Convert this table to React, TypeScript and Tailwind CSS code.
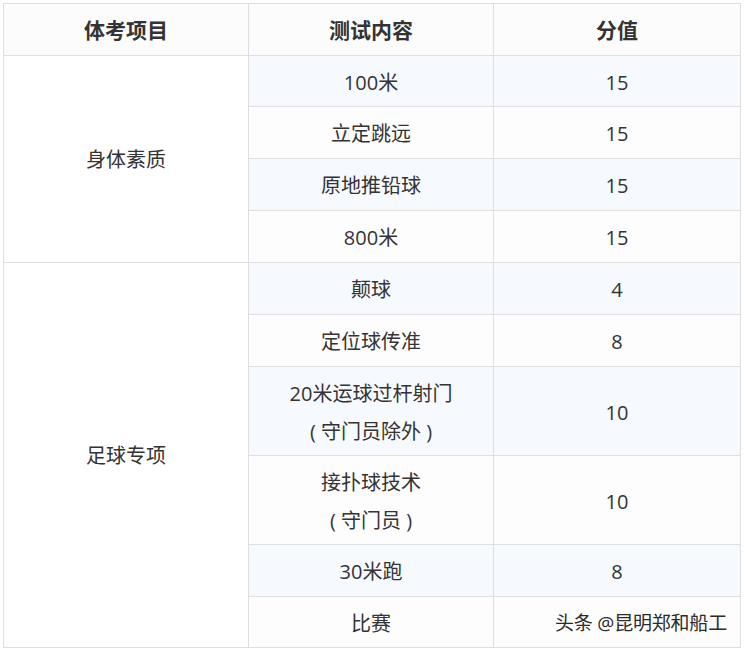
import React from "react";

const font = { fontFamily: '"Open Sans", "Noto Sans CJK SC", sans-serif' };

type Row = { item?: string; span?: number; content: string[]; score: string; h: number; blue: boolean };

const rows: Row[] = [
  { item: "身体素质", span: 4, content: ["100米"], score: "15", h: 51, blue: true },
  { content: ["立定跳远"], score: "15", h: 52, blue: false },
  { content: ["原地推铅球"], score: "15", h: 52, blue: true },
  { content: ["800米"], score: "15", h: 52, blue: false },
  { item: "足球专项", span: 6, content: ["颠球"], score: "4", h: 52, blue: true },
  { content: ["定位球传准"], score: "8", h: 52, blue: false },
  { content: ["20米运球过杆射门", "( 守门员除外 )"], score: "10", h: 89, blue: true },
  { content: ["接扑球技术", "( 守门员 )"], score: "10", h: 89, blue: false },
  { content: ["30米跑"], score: "8", h: 52, blue: true },
  { content: ["比赛"], score: "", h: 51, blue: false },
];

export default function App() {
  return (
    <div className="relative w-[744px] h-[651px] bg-white pt-[3px] pl-[3px]" style={font}>
      <table className="border-collapse w-[737px] table-fixed text-[#333]">
        <colgroup>
          <col className="w-[245px]" />
          <col className="w-[245px]" />
          <col className="w-[247px]" />
        </colgroup>
        <thead>
          <tr className="h-[52px] bg-[#fcfcfc]">
            <th className="border border-[#dfdfdf] text-[21px] font-bold p-0 pt-[2px]">体考项目</th>
            <th className="border border-[#dfdfdf] text-[21px] font-bold p-0 pt-[2px]">测试内容</th>
            <th className="border border-[#dfdfdf] text-[21px] font-bold p-0 pt-[2px]">分值</th>
          </tr>
        </thead>
        <tbody>
          {rows.map((r, i) => (
            <tr key={i} style={{ height: r.h }}>
              {r.item && (
                <td rowSpan={r.span} className="border border-[#dfdfdf] bg-white text-center text-[20px] p-0 pt-[2px]">
                  {r.item}
                </td>
              )}
              <td className={`border border-[#dfdfdf] text-center text-[20px] p-0 pt-[3px] leading-[38px] ${r.blue ? "bg-[#f6f9fd]" : "bg-[#fdfdfd]"}`}>
                {r.content.map((c, j) => (
                  <div key={j} className="whitespace-pre">{c}</div>
                ))}
              </td>
              <td className={`border border-[#dfdfdf] text-center text-[20px] p-0 pt-[3px] ${r.blue ? "bg-[#f6f9fd]" : "bg-[#fdfdfd]"}`}>
                {r.score}
              </td>
            </tr>
          ))}
        </tbody>
      </table>
      <div className="absolute left-[555px] top-[609px] text-[19px] font-normal leading-[28px] text-[#2a2a2a] tracking-[-0.2px]" style={{ textShadow: "0 0 2px #fff, 0 0 2px #fff" }}>
        头条 @昆明郑和船工
      </div>
    </div>
  );
}
